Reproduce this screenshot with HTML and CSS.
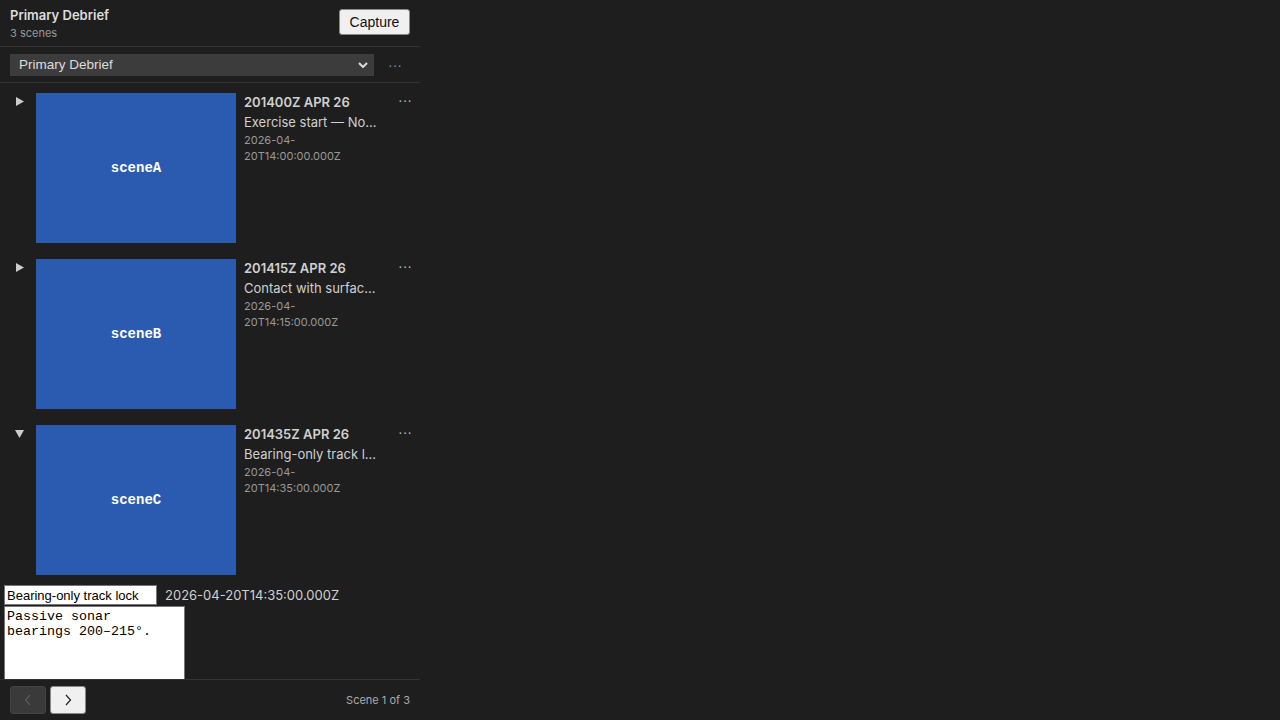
FILE: index.html
```html
<!DOCTYPE html>
<html lang="en">
<head>
    <meta charset="UTF-8">
    <title>Debrief Scenes</title>
    <link rel="stylesheet" href="styles.css">
</head>
<body>
    <div class="panel">
        <!-- Header -->
        <div class="panel-header">
            <div class="panel-title">
                <div class="title">Primary Debrief</div>
                <div class="subtitle">3 scenes</div>
            </div>
            <button class="btn-light capture">Capture</button>
        </div>

        <!-- Debrief selector -->
        <div class="select-row">
            <select class="debrief-select">
                <option>Primary Debrief</option>
            </select>
            <span class="more dim">···</span>
        </div>

        <!-- Scene list -->
        <div class="scene-list">
            <div class="scene">
                <span class="toggle"><svg width="9" height="9" viewBox="0 0 9 9"><path d="M1 0L9 4.5L1 9Z" fill="#ccc"/></svg></span>
                <div class="thumb">sceneA</div>
                <div class="scene-info">
                    <div class="dtg">201400Z APR 26</div>
                    <div class="desc">Exercise start — Northern sector</div>
                    <div class="stamp">2026-04-<br>20T14:00:00.000Z</div>
                </div>
                <span class="more">···</span>
            </div>
            <div class="scene">
                <span class="toggle"><svg width="9" height="9" viewBox="0 0 9 9"><path d="M1 0L9 4.5L1 9Z" fill="#ccc"/></svg></span>
                <div class="thumb">sceneB</div>
                <div class="scene-info">
                    <div class="dtg">201415Z APR 26</div>
                    <div class="desc">Contact with surface group</div>
                    <div class="stamp">2026-04-<br>20T14:15:00.000Z</div>
                </div>
                <span class="more">···</span>
            </div>
            <div class="scene">
                <span class="toggle"><svg width="9" height="9" viewBox="0 0 9 9"><path d="M0 1L9 1L4.5 9Z" fill="#ccc"/></svg></span>
                <div class="thumb">sceneC</div>
                <div class="scene-info">
                    <div class="dtg">201435Z APR 26</div>
                    <div class="desc">Bearing-only track lock</div>
                    <div class="stamp">2026-04-<br>20T14:35:00.000Z</div>
                </div>
                <span class="more">···</span>
            </div>

            <!-- Expanded scene editor -->
            <div class="scene-edit">
                <div class="edit-line">
                    <input type="text" class="edit-title" value="Bearing-only track lock">
                    <span class="edit-stamp">2026-04-20T14:35:00.000Z</span>
                </div>
                <textarea class="edit-notes" rows="6">Passive sonar bearings 200–215°.</textarea>
            </div>
        </div>

        <!-- Footer -->
        <div class="panel-footer">
            <div class="nav">
                <button class="nav-btn" disabled><svg width="8" height="12" viewBox="0 0 8 12"><path d="M6 1L1.5 6L6 11" fill="none" stroke="#5a5a5a" stroke-width="1.2"/></svg></button>
                <button class="nav-btn btn-light"><svg width="8" height="12" viewBox="0 0 8 12"><path d="M2 1L6.5 6L2 11" fill="none" stroke="#222" stroke-width="1.2"/></svg></button>
            </div>
            <span class="counter">Scene 1 of 3</span>
        </div>
    </div>
</body>
</html>
```

FILE: styles.css
```css
body {
    margin: 0;
    background-color: #1e1e1e;
    font-family: Inter, "Liberation Sans", sans-serif;
    color: #d4d4d4;
}
.panel {
    width: 420px;
    height: 720px;
    display: flex;
    flex-direction: column;
}
.panel-header {
    display: flex;
    justify-content: space-between;
    align-items: flex-start;
    padding: 8px 10px 0 10px;
    height: 38px;
    border-bottom: 1px solid #333;
}
.title {
    font-size: 13px;
    font-weight: 600;
    color: #dcdcdc;
    line-height: 15px;
}
.subtitle {
    font-size: 11px;
    color: #999;
    margin-top: 3px;
}
.btn-light {
    background-color: #f0f0f0;
    color: #111;
    border: 1px solid #8a8a8a;
    border-radius: 3px;
    font-family: "Liberation Sans", Arial, sans-serif;
}
.capture {
    margin-top: 1px;
    width: 71px;
    height: 26px;
    font-size: 14px;
    padding: 0;
}
.select-row {
    display: flex;
    align-items: center;
    padding: 6px 10px;
    height: 23px;
    border-bottom: 1px solid #333;
}
.debrief-select {
    appearance: none;
    width: 364px;
    height: 22px;
    background-color: #3c3c3c;
    background-image: url("data:image/svg+xml,%3Csvg xmlns='http://www.w3.org/2000/svg' width='10' height='6'%3E%3Cpath d='M1 1l4 4 4-4' fill='none' stroke='%23ddd' stroke-width='2'/%3E%3C/svg%3E");
    background-repeat: no-repeat;
    background-position: right 6px center;
    color: #dcdcdc;
    border: none;
    border-radius: 0;
    padding: 0 9px;
    font-family: "Liberation Sans", Arial, sans-serif;
    font-size: 13.5px;
}
.more {
    margin-left: auto;
    width: 20px;
    text-align: center;
    font-family: "Liberation Sans", Arial, sans-serif;
    font-size: 14px;
    color: #bbb;
    line-height: 14px;
}
.more.dim {
    color: #888;
    margin-right: 5px;
}
.scene-list {
    flex: 1;
    overflow: hidden;
    padding-top: 10px;
}
.scene {
    display: flex;
    align-items: flex-start;
    padding: 0 5px 16px 10px;
}
.toggle {
    width: 18px;
    height: 16px;
    margin-right: 8px;
    display: flex;
    align-items: center;
    justify-content: center;
}
.thumb {
    width: 200px;
    height: 150px;
    background-color: #2b5bb0;
    color: #fff;
    display: flex;
    align-items: center;
    justify-content: center;
    font-family: "Liberation Mono", "Courier New", monospace;
    font-size: 14px;
    font-weight: bold;
    flex-shrink: 0;
}
.scene-info {
    width: 140px;
    margin-left: 8px;
}
.dtg {
    font-size: 13px;
    font-weight: 600;
    color: #d0d0d0;
    line-height: 18px;
}
.desc {
    font-size: 13px;
    color: #d0d0d0;
    line-height: 18px;
    margin-top: 2px;
    white-space: nowrap;
    overflow: hidden;
    text-overflow: ellipsis;
    width: 137px;
}
.stamp {
    font-size: 11px;
    color: #999;
    line-height: 16px;
    margin-top: 1px;
}
.scene-edit {
    padding: 0 4px;
    margin-top: -6px;
}
.edit-line {
    display: flex;
    align-items: center;
    gap: 8px;
}
.edit-title {
    width: 147px;
    height: 16px;
    padding: 1px 2px;
    border: 1px solid #767676;
    border-radius: 0;
    font-family: "Liberation Sans", Arial, sans-serif;
    font-size: 13px;
    color: #000;
    background: #fff;
}
.edit-stamp {
    font-size: 13px;
    color: #d0d0d0;
}
.edit-notes {
    display: block;
    width: 160px;
    margin-top: 1px;
    padding: 2px 17px 2px 2px;
    border: 1px solid #767676;
    border-radius: 0;
    font-family: "Liberation Mono", "Courier New", monospace;
    font-size: 13.33px;
    line-height: 15px;
    color: #000;
    resize: none;
}
.panel-footer {
    display: flex;
    justify-content: space-between;
    align-items: center;
    height: 40px;
    padding: 0 10px;
    border-top: 1px solid #333;
    background-color: #1e1e1e;
}
.nav {
    display: flex;
    gap: 4px;
}
.nav-btn {
    width: 36px;
    height: 28px;
    padding: 0;
    border-radius: 3px;
    display: flex;
    align-items: center;
    justify-content: center;
}
.nav-btn:disabled {
    background-color: #3a3a3a;
    border: 1px solid #444;
}
.counter {
    font-size: 11px;
    color: #aaa;
}
```
